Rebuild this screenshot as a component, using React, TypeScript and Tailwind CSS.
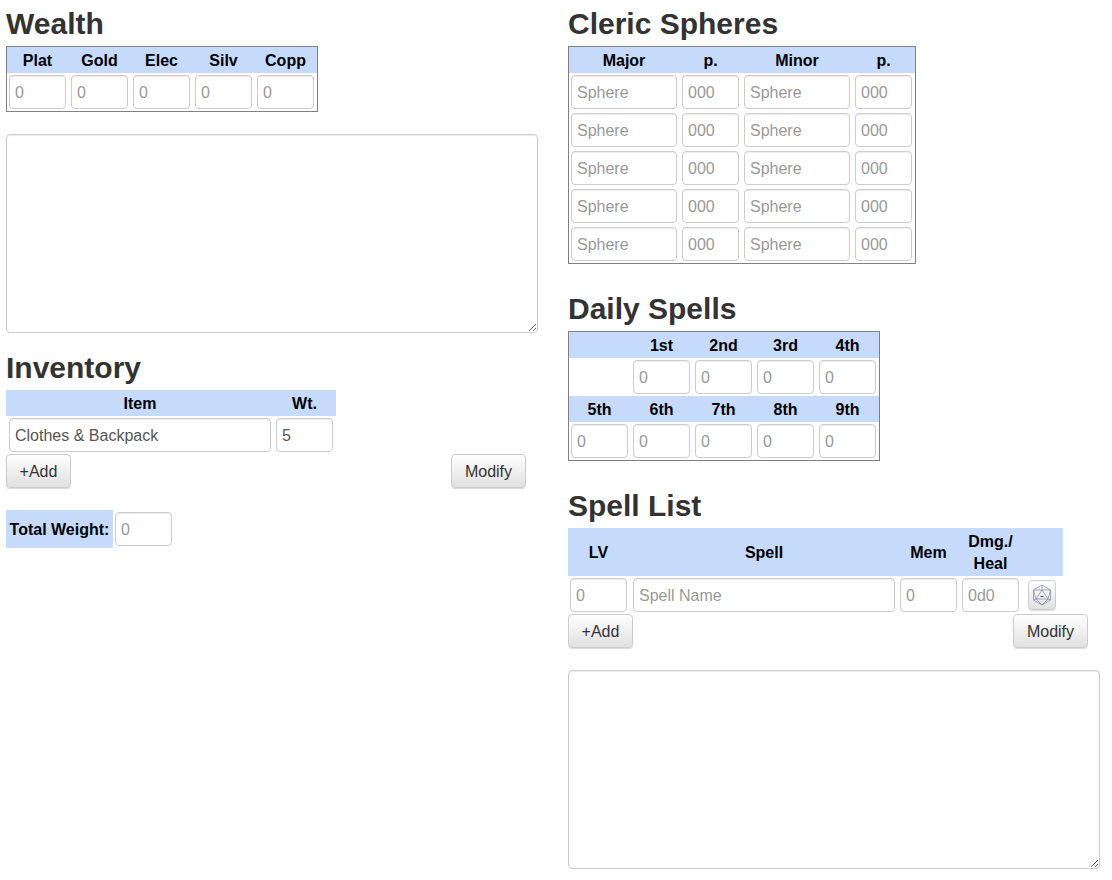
const font = { fontFamily: '"Liberation Sans", Arial, sans-serif' };

function Heading({ children, className = "" }: { children: React.ReactNode; className?: string }) {
  return <h2 className={`h-[34px] mb-[5px] text-[30px] leading-[34px] font-bold text-[#333] ${className}`}>{children}</h2>;
}

function Field({ placeholder, value, width = "w-[57px]" }: { placeholder?: string; value?: string; width?: string }) {
  return (
    <input
      readOnly
      placeholder={placeholder}
      value={value}
      className={`${width} h-[34px] shrink-0 px-[5px] pt-[2px] rounded border border-[#ccc] bg-white text-base text-[#555] placeholder:text-[#999] shadow-[inset_0_1px_1px_rgba(0,0,0,0.075)] outline-none`}
    />
  );
}

function Btn({ children, className = "" }: { children: React.ReactNode; className?: string }) {
  return (
    <button className={`h-[34px] pt-[2px] rounded border border-[#ccc] bg-gradient-to-b from-white to-[#e0e0e0] text-base text-[#333] shadow-[0_1px_1px_rgba(0,0,0,0.15)] ${className}`}>
      {children}
    </button>
  );
}

function HeadRow({ labels, widths }: { labels: string[]; widths?: string[] }) {
  return (
    <div className="flex h-[26px] gap-[5px] pl-[2px] pr-[3px] bg-[#c6dafc]">
      {labels.map((l, i) => (
        <div key={i} className={`${widths ? widths[i] : "w-[57px]"} text-center text-base leading-[28px] font-bold text-black`}>
          {l}
        </div>
      ))}
    </div>
  );
}

function InputRow({ children }: { children: React.ReactNode }) {
  return <div className="flex gap-[5px] pl-[2px] pr-[3px] py-[2px]">{children}</div>;
}

function TextBox() {
  return <textarea readOnly className="block w-[532px] h-[199px] rounded border border-[#ccc] bg-white shadow-[inset_0_1px_1px_rgba(0,0,0,0.075)] outline-none" />;
}

function Dice() {
  return (
    <svg width="20" height="22" viewBox="0 0 20 22" fill="none" stroke="#8585a5" strokeWidth="0.7">
      <path d="M10 1 18.5 6v10L10 21 1.5 16V6Z" />
      <path d="M10 6 16 15H4Z" />
      <path d="M10 1v5M1.5 6 10 6 18.5 6M1.5 6 4 15M18.5 6 16 15M1.5 16 4 15M18.5 16 16 15M4 15 10 21 16 15" />
      <path d="M8.5 12.5h3" stroke="#555" strokeWidth="1" />
    </svg>
  );
}

export default function App() {
  const sphereWidths = ["w-[106px]", "w-[57px]", "w-[106px]", "w-[57px]"];

  return (
    <div style={font} className="grid grid-cols-[532px_532px] gap-x-[30px] pl-[6px] pt-[7px] bg-white min-h-screen">
      {/* Left column */}
      <div>
        <Heading>Wealth</Heading>
        <div className="w-fit border border-[#808080]">
          <HeadRow labels={["Plat", "Gold", "Elec", "Silv", "Copp"]} />
          <InputRow>
            {[0, 1, 2, 3, 4].map((i) => (
              <Field key={i} placeholder="0" />
            ))}
          </InputRow>
        </div>

        <div className="mt-[22px]">
          <TextBox />
        </div>

        <Heading className="mt-[18px]">Inventory</Heading>
        <div className="w-[330px]">
          <div className="flex h-[26px] gap-[5px] pl-[3px] pr-[3px] bg-[#c6dafc] text-base leading-[28px] font-bold text-black text-center">
            <div className="w-[262px]">Item</div>
            <div className="w-[57px]">Wt.</div>
          </div>
          <div className="flex gap-[5px] px-[3px] py-[2px]">
            <Field value="Clothes & Backpack" width="w-[262px]" />
            <Field value="5" />
          </div>
        </div>
        <div className="flex justify-between w-[520px]">
          <Btn className="w-[65px]">+Add</Btn>
          <Btn className="w-[75px]">Modify</Btn>
        </div>

        <div className="flex items-center gap-[2px] mt-[22px]">
          <div className="h-[38px] w-[107px] bg-[#c6dafc] text-base leading-[40px] font-bold text-black text-center">Total Weight:</div>
          <Field placeholder="0" />
        </div>
      </div>

      {/* Right column */}
      <div>
        <Heading>Cleric Spheres</Heading>
        <div className="w-fit border border-[#808080]">
          <HeadRow labels={["Major", "p.", "Minor", "p."]} widths={sphereWidths} />
          <div className="flex flex-col gap-[4px] pl-[2px] pr-[3px] py-[2px]">
            {[0, 1, 2, 3, 4].map((i) => (
              <div key={i} className="flex gap-[5px]">
                <Field placeholder="Sphere" width="w-[106px]" />
                <Field placeholder="000" />
                <Field placeholder="Sphere" width="w-[106px]" />
                <Field placeholder="000" />
              </div>
            ))}
          </div>
        </div>

        <Heading className="mt-[28px]">Daily Spells</Heading>
        <div className="w-fit border border-[#808080]">
          <HeadRow labels={["", "1st", "2nd", "3rd", "4th"]} />
          <InputRow>
            <div className="w-[57px]" />
            {[0, 1, 2, 3].map((i) => (
              <Field key={i} placeholder="0" />
            ))}
          </InputRow>
          <HeadRow labels={["5th", "6th", "7th", "8th", "9th"]} />
          <InputRow>
            {[0, 1, 2, 3, 4].map((i) => (
              <Field key={i} placeholder="0" />
            ))}
          </InputRow>
        </div>

        <Heading className="mt-[28px]">Spell List</Heading>
        <div className="w-[495px]">
          <div className="flex h-[48px] items-center pl-[2px] pt-[2px] bg-[#c6dafc] text-base font-bold text-black text-center">
            <div className="w-[57px]">LV</div>
            <div className="w-[262px] ml-[6px]">Spell</div>
            <div className="w-[57px] ml-[5px]">Mem</div>
            <div className="w-[57px] ml-[5px] leading-[22px]">
              Dmg./
              <br />
              Heal
            </div>
          </div>
          <div className="flex items-center pl-[2px] py-[2px]">
            <Field placeholder="0" />
            <div className="ml-[6px]">
              <Field placeholder="Spell Name" width="w-[262px]" />
            </div>
            <div className="ml-[5px]">
              <Field placeholder="0" />
            </div>
            <div className="ml-[5px]">
              <Field placeholder="0d0" />
            </div>
            <button className="ml-[9px] flex h-[30px] w-[28px] items-center justify-center rounded border border-[#ccc] bg-gradient-to-b from-white to-[#e0e0e0] shadow-[0_1px_1px_rgba(0,0,0,0.15)]">
              <Dice />
            </button>
          </div>
        </div>
        <div className="flex justify-between w-[520px]">
          <Btn className="w-[65px]">+Add</Btn>
          <Btn className="w-[75px]">Modify</Btn>
        </div>

        <div className="mt-[22px]">
          <TextBox />
        </div>
      </div>
    </div>
  );
}
